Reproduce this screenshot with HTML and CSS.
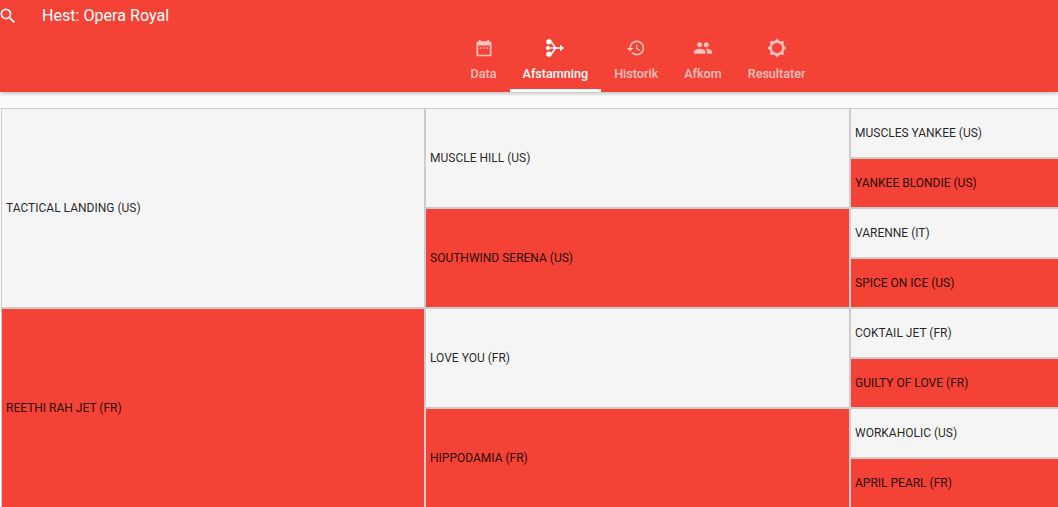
FILE: index.html
```html
<!DOCTYPE html>
<html lang="da">
<head>
<meta charset="utf-8">
<title>Hest: Opera Royal</title>
<link rel="stylesheet" href="styles.css">
</head>
<body>
<header class="topbar">
  <div class="titlerow">
    <svg class="search" viewBox="0 0 24 24"><path d="M15.5 14h-.79l-.28-.27A6.47 6.47 0 0 0 16 9.5 6.5 6.5 0 1 0 9.5 16c1.61 0 3.09-.59 4.23-1.57l.27.28v.79l5 4.99L20.49 19l-4.99-5zm-6 0C7.01 14 5 11.99 5 9.5S7.01 5 9.5 5 14 7.01 14 9.5 11.99 14 9.5 14z"/></svg>
    <span class="title">Hest: Opera Royal</span>
  </div>
  <nav class="tabs">
    <div class="tab">
      <svg viewBox="0 0 24 24"><path d="M9 11H7v2h2v-2zm4 0h-2v2h2v-2zm4 0h-2v2h2v-2zm2-7h-1V2h-2v2H8V2H6v2H5c-1.11 0-1.99.9-1.99 2L3 20c0 1.1.89 2 2 2h14c1.1 0 2-.9 2-2V6c0-1.1-.9-2-2-2zm0 16H5V9h14v11z"/></svg>
      <span>Data</span>
    </div>
    <div class="tab active">
      <svg viewBox="0 0 24 24"><circle cx="4.8" cy="4.5" r="3.3"/><circle cx="3.6" cy="12" r="2.4"/><circle cx="4.8" cy="19.5" r="3.3"/><path d="M5 4.5c6 0 5 7.5 9 7.5M5 19.5c6 0 5-7.5 9-7.5M4 12h15" fill="none" stroke="#fff" stroke-width="2"/><path d="M18 8l5 4-5 4z"/></svg>
      <span>Afstamning</span>
    </div>
    <div class="tab">
      <svg viewBox="0 0 24 24"><path d="M13 3a9 9 0 0 0-9 9H1l3.89 3.89.07.14L9 12H6c0-3.87 3.13-7 7-7s7 3.13 7 7-3.13 7-7 7c-1.93 0-3.68-.79-4.94-2.06l-1.42 1.42A8.954 8.954 0 0 0 13 21a9 9 0 0 0 0-18zm-1 5v5l4.28 2.54.72-1.21-3.5-2.08V8H12z"/></svg>
      <span>Historik</span>
    </div>
    <div class="tab">
      <svg viewBox="0 0 24 24"><path d="M16 11c1.66 0 2.99-1.34 2.99-3S17.66 5 16 5c-1.66 0-3 1.34-3 3s1.34 3 3 3zm-8 0c1.66 0 2.99-1.34 2.99-3S9.66 5 8 5C6.34 5 5 6.34 5 8s1.34 3 3 3zm0 2c-2.33 0-7 1.17-7 3.5V19h14v-2.5c0-2.33-4.67-3.5-7-3.5zm8 0c-.29 0-.62.02-.97.05 1.16.84 1.97 1.97 1.97 3.45V19h6v-2.5c0-2.33-4.67-3.5-7-3.5z"/></svg>
      <span>Afkom</span>
    </div>
    <div class="tab">
      <svg viewBox="0 0 24 24"><path fill-rule="evenodd" d="M20 15.31L23.31 12 20 8.69V4h-4.69L12 .69 8.69 4H4v4.69L.69 12 4 15.31V20h4.69L12 23.31 15.31 20H20v-4.69zM12 18c-3.31 0-6-2.69-6-6s2.69-6 6-6 6 2.69 6 6-2.69 6-6 6z"/></svg>
      <span>Resultater</span>
    </div>
  </nav>
</header>
<main class="pedigree">
  <div class="cell gen1 light">TACTICAL LANDING (US)</div>
  <div class="cell gen2 light">MUSCLE HILL (US)</div>
  <div class="cell gen3 light">MUSCLES YANKEE (US)</div>
  <div class="cell gen3 red">YANKEE BLONDIE (US)</div>
  <div class="cell gen2 red">SOUTHWIND SERENA (US)</div>
  <div class="cell gen3 light">VARENNE (IT)</div>
  <div class="cell gen3 red">SPICE ON ICE (US)</div>
  <div class="cell gen1 red">REETHI RAH JET (FR)</div>
  <div class="cell gen2 light">LOVE YOU (FR)</div>
  <div class="cell gen3 light">COKTAIL JET (FR)</div>
  <div class="cell gen3 red">GUILTY OF LOVE (FR)</div>
  <div class="cell gen2 red">HIPPODAMIA (FR)</div>
  <div class="cell gen3 light">WORKAHOLIC (US)</div>
  <div class="cell gen3 red">APRIL PEARL (FR)</div>
</main>
</body>
</html>
```
FILE: styles.css
```css
* { box-sizing: border-box; }
html, body { height: 100%; }
body {
  margin: 0;
  background: #fafafa;
  font-family: Roboto, sans-serif;
  overflow: hidden;
}
.topbar {
  height: 92px;
  background: #f44336;
  color: #fff;
  box-shadow: 0 2px 4px -1px rgba(0,0,0,.2), 0 1px 5px 0 rgba(0,0,0,.12);
  display: flex;
  flex-direction: column;
}
.titlerow {
  height: 30px;
  display: flex;
  align-items: center;
  gap: 24px;
}
.search { width: 20px; height: 20px; fill: #fff; margin-left: -2px; margin-top: 1px; }
.title { font-size: 16.1px; font-weight: 400; }
.tabs {
  flex: 1;
  display: flex;
  justify-content: center;
  padding-left: 218px;
}
.tab {
  padding: 8px 13px 0;
  display: flex;
  flex-direction: column;
  align-items: center;
  gap: 8px;
  font-size: 12.6px;
  font-weight: 500;
  color: rgba(255,255,255,.68);
  border-bottom: 3px solid transparent;
}
.tab svg { width: 20px; height: 20px; fill: rgba(255,255,255,.68); }
.tab.active { color: #fff; border-bottom-color: #fff; }
.tab.active svg { fill: #fff; }
.pedigree {
  margin: 16px 0 0 1px;
  width: 1274px;
  display: grid;
  grid-template-columns: 424px 425px 425px;
  grid-template-rows: repeat(8, 50px);
  font-size: 12px;
  color: rgba(0,0,0,.87);
}
.cell {
  display: flex;
  align-items: center;
  padding-left: 4px;
  border: 1px solid #ccc;
}
.gen1 { grid-column: 1; grid-row: span 4; }
.gen2 { grid-column: 2; grid-row: span 2; }
.gen3 { grid-column: 3; }
.light { background: #f5f5f5; }
.red { background: #f44336; }
```
